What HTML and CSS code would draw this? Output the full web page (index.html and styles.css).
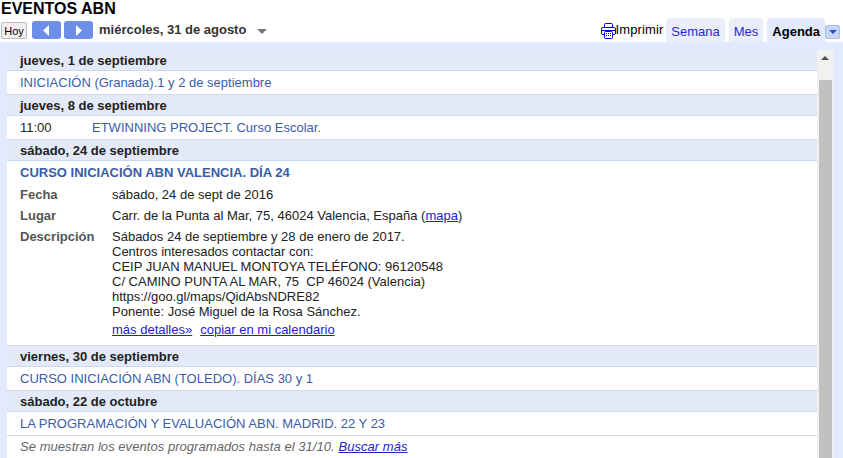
FILE: index.html
```html
<!DOCTYPE html>
<html lang="es">
<head>
<meta charset="utf-8">
<title>Eventos ABN</title>
<link rel="stylesheet" href="styles.css">
</head>
<body>
<h1 class="title">EVENTOS ABN</h1>
<div class="toolbar">
  <button class="today">Hoy</button>
  <button class="nav"><svg width="7" height="11" viewBox="0 0 7 11"><path d="M6 0v11L0 5.500z" fill="#fff"/></svg></button>
  <button class="nav"><svg width="7" height="11" viewBox="0 0 7 11"><path d="M1 0v11L7 5.500z" fill="#fff"/></svg></button>
  <span class="date">miércoles, 31 de agosto</span>
  <span class="date-arrow"></span>
  <div class="spacer"></div>
  <svg class="printer" width="15" height="16" viewBox="0 0 15 16" fill="none" stroke="#0000d8" stroke-width="1"><path d="M3.500 4.500V1.500a1 1 0 0 1 1-1h6a1 1 0 0 1 1 1v3"/><rect x="0.500" y="4.500" width="14" height="7" rx="1.500"/><path d="M0.500 7.500h14" /><rect x="3.500" y="8.500" width="8" height="7" rx="1" fill="#fff"/><path d="M5 10.500h1M7 10.500h1M9 10.500h1M5 12.500h1M7 12.500h1M9 12.500h1"/></svg>
  <span class="print">Imprimir</span>
  <a class="tab">Semana</a>
  <a class="tab">Mes</a>
  <a class="tab active">Agenda</a>
  <span class="menu"></span>
</div>
<main class="panel">
  <div class="frame">
    <div class="list">
      <div class="day">jueves, 1 de septiembre</div>
      <div class="event"><a>INICIACIÓN (Granada).1 y 2 de septiembre</a></div>
      <div class="day">jueves, 8 de septiembre</div>
      <div class="event"><span class="time">11:00</span><a>ETWINNING PROJECT. Curso Escolar.</a></div>
      <div class="day">sábado, 24 de septiembre</div>
      <div class="event open">
        <a class="open-title">CURSO INICIACIÓN ABN VALENCIA. DÍA 24</a>
        <dl class="details">
          <dt>Fecha</dt><dd>sábado, 24 de sept de 2016</dd>
          <dt>Lugar</dt><dd>Carr. de la Punta al Mar, 75, 46024 Valencia, España (<a class="link">mapa</a>)</dd>
          <dt>Descripción</dt>
          <dd class="desc">Sábados 24 de septiembre y 28 de enero de 2017.<br>Centros interesados contactar con:<br>CEIP JUAN MANUEL MONTOYA TELÉFONO: 96120548<br>C/ CAMINO PUNTA AL MAR, 75&nbsp; CP 46024 (Valencia)<br>https://goo.gl/maps/QidAbsNDRE82<br>Ponente: José Miguel de la Rosa Sánchez.
            <div class="actions"><a class="link">más detalles»</a><a class="link">copiar en mi calendario</a></div>
          </dd>
        </dl>
      </div>
      <div class="day">viernes, 30 de septiembre</div>
      <div class="event"><a>CURSO INICIACIÓN ABN (TOLEDO). DÍAS 30 y 1</a></div>
      <div class="day">sábado, 22 de octubre</div>
      <div class="event"><a>LA PROGRAMACIÓN Y EVALUACIÓN ABN. MADRID. 22 Y 23</a></div>
      <div class="more"><i>Se muestran los eventos programados hasta el 31/10. <a class="link">Buscar más</a></i></div>
    </div>
    <div class="scrollbar">
      <span class="up"></span>
      <span class="thumb"></span>
    </div>
  </div>
</main>
</body>
</html>
```
FILE: styles.css
```css
* { box-sizing: border-box; }
html, body { margin: 0; height: 458px; overflow: hidden; }
body { background: #fff; font-family: "Liberation Sans", Arial, sans-serif; font-size: 13px; color: #222; }
.title { margin: 0; height: 18px; font-size: 16px; line-height: 18px; font-weight: bold; color: #000; padding-left: 1px; }
.toolbar { display: flex; align-items: flex-end; height: 24px; padding-left: 1px; }
.today { width: 26px; height: 17px; margin: 0 5px 3px 0; padding: 0; border: 1px solid #bbb; border-radius: 2px; background: #f0f0f0; font: 11px "Liberation Sans", Arial, sans-serif; color: #000; line-height: 14px; }
.nav { display: flex; align-items: center; justify-content: center; width: 29px; height: 18px; margin: 0 3px 3px 0; padding: 0; border: 0; border-radius: 3px; background: #6d8ee8; }
.date { margin: 0 0 3px 3px; font-size: 13px; font-weight: bold; color: #333; line-height: 18px; }
.date-arrow { width: 0; height: 0; margin: 0 0 8px 11px; border: 5px solid transparent; border-top: 5px solid #777; border-bottom: 0; }
.spacer { flex: 1; }
.printer { margin: 0 0 3px 0; }
.print { margin: 0 -1px 3px 0; font-size: 13px; line-height: 18px; letter-spacing: 0.1px; color: #000; }
.tab { height: 24px; margin-left: 4px; padding: 0 5px; border-radius: 4px 4px 0 0; background: #e9eef8; color: #2a2ad0; font-size: 13px; line-height: 27px; }
.tab.active { margin-left: 4px; background: #e3e9ff; color: #000; font-weight: bold; }
.menu { position: relative; width: 15px; height: 14px; margin: 0 3px 3px 0; border: 1px solid #a8bdea; background: #c8d6f6; border-radius: 2px; }
.menu::after { content: ""; position: absolute; left: 3px; top: 4px; border: 4px solid transparent; border-top: 4px solid #2a50d8; border-bottom: 0; }
.panel { height: 416px; padding: 8px 9px 0 7px; background: #e3e9ff; }
.frame { display: flex; height: 408px; background: #fff; }
.list { flex: 1; min-width: 0; overflow: hidden; }
.day { height: 21px; padding-left: 13px; background: #e3e9f7; border-bottom: 1px solid #c9d9f0; font-weight: bold; line-height: 21px; color: #222; }
.event { display: flex; height: 24px; padding-left: 13px; border-bottom: 1px solid #d3dbe6; line-height: 24px; }
.event a { color: #3a5ca8; }
.time { width: 72px; color: #222; }
.event.open { display: block; height: 185px; }
.event.open .open-title { display: block; height: 23px; font-weight: bold; }
.details { display: grid; grid-template-columns: 92px 1fr; margin: 0; line-height: 15px; }
dt { font-weight: bold; color: #555; margin-bottom: 3px; padding-top: 3px; }
dd { margin: 0 0 3px; padding-top: 3px; color: #222; }
.event a.link, .more a.link { color: #2222cc; text-decoration: underline; }
.actions { display: flex; gap: 8px; margin-top: 3px; }
.more { height: 22px; padding-left: 13px; line-height: 22px; color: #666; letter-spacing: 0.05px; }
.scrollbar { position: relative; flex: none; width: 17px; background: #f1f1f1; }
.up { position: absolute; left: 4px; top: 6px; border: 4px solid transparent; border-bottom: 4px solid #505050; border-top: 0; }
.thumb { position: absolute; left: 2px; right: 0; top: 30px; bottom: 0; width: 13px; background: #c1c1c1; }
```
